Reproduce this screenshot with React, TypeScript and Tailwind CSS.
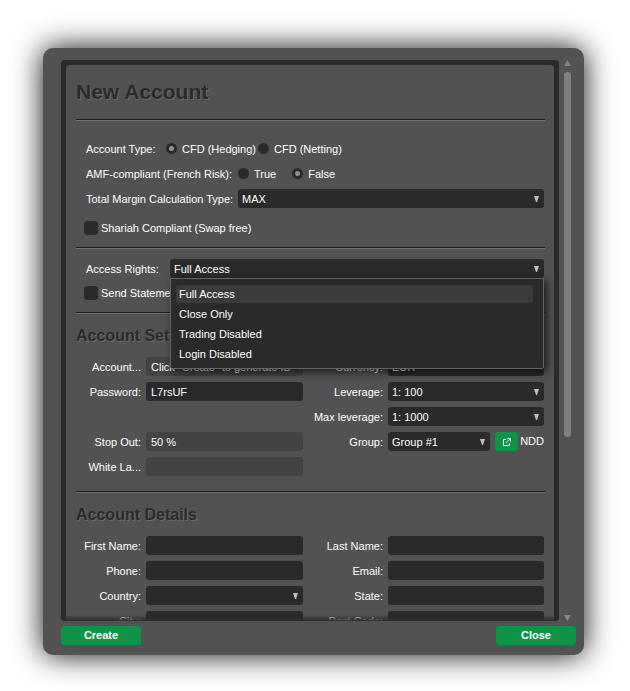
import { useState } from "react";
import type { ReactNode } from "react";

const accessOptions = ["Full Access", "Close Only", "Trading Disabled", "Login Disabled"];

const field = "h-[19px] w-full min-w-0 rounded-[3px] bg-[#2a2a2a] px-[5px] pt-px text-white outline-none";
const lockedField = "h-[19px] w-full min-w-0 rounded-[3px] bg-[#434343] px-[5px] pt-px text-white outline-none";

function Rule() {
  return <hr className="-mr-px h-[2px] border-0 border-t border-t-[#1c1c1c] bg-[#707070]" />;
}

function Heading({ children }: { children: ReactNode }) {
  return (
    <h2 className="mt-[10px] mb-[9px] text-[16px] leading-6 font-bold text-[#2a2a2a] [text-shadow:1px_1px_0_#6a6a6a]">
      {children}
    </h2>
  );
}

type SelectProps = {
  id: string;
  options: string[];
  value?: string;
  onChange?: (value: string) => void;
  arrow?: boolean;
};

function Select({ id, options, value, onChange, arrow = true }: SelectProps) {
  return (
    <div className="relative min-w-0 flex-1">
      <select
        id={id}
        value={value}
        onChange={onChange ? (e) => onChange(e.target.value) : undefined}
        className="block h-[19px] w-full appearance-none rounded-[3px] bg-[#2a2a2a] pt-[2px] pr-5 pl-1 leading-[17px] text-white outline-none"
      >
        {options.map((o) => (
          <option key={o}>{o}</option>
        ))}
      </select>
      {arrow && (
        <svg className="pointer-events-none absolute top-[7px] right-[5px]" width="5" height="6" viewBox="0 0 5 6">
          <path d="M0 0h5L3 6H2z" fill="#c0c0c0" />
        </svg>
      )}
    </div>
  );
}

function Radio({ id, name, label, checked }: { id: string; name: string; label: string; checked?: boolean }) {
  return (
    <span className="flex items-center gap-[5px]">
      <input
        id={id}
        type="radio"
        name={name}
        defaultChecked={checked}
        className="size-[11px] appearance-none rounded-full border-[3px] border-[#2a2a2a] bg-[#2a2a2a] checked:bg-[#929292]"
      />
      <label htmlFor={id} className="pt-[2px]">
        {label}
      </label>
    </span>
  );
}

function Check({ id, label }: { id: string; label: string }) {
  return (
    <div className="ml-2 flex h-[18px] items-center gap-[3px]">
      <input
        id={id}
        type="checkbox"
        className="size-[14px] appearance-none rounded-[3px] bg-[#2a2a2a] checked:bg-[#929292]"
      />
      <label htmlFor={id}>{label}</label>
    </div>
  );
}

function Left({ id, label, children }: { id: string; label: string; children: ReactNode }) {
  return (
    <div className="flex min-w-0 items-center gap-[5px]">
      <label htmlFor={id} className="w-[65px] shrink-0 pt-[2px] text-right whitespace-nowrap">
        {label}
      </label>
      {children}
    </div>
  );
}

function Right({ id, label, children }: { id: string; label: string; children: ReactNode }) {
  return (
    <div className="flex min-w-0 items-center gap-[5px]">
      <label htmlFor={id} className="w-20 shrink-0 pt-[2px] text-right">
        {label}
      </label>
      {children}
    </div>
  );
}

export default function App() {
  const [access, setAccess] = useState("Full Access");

  return (
    <div className="flex h-screen bg-white pt-12 pr-[46px] pb-9 pl-[43px] font-['Liberation_Sans',Arial,sans-serif] text-[11px] leading-[17px] text-white">
      <div
        role="dialog"
        aria-labelledby="dialog-title"
        className="flex min-h-0 min-w-0 flex-1 flex-col rounded-[10px] bg-[#525252] pt-3 pr-2 pb-[10px] pl-[18px] shadow-[0_0_30px_rgba(0,0,0,0.95)]"
      >
        <div className="flex min-h-0 flex-1">
          <div className="relative min-w-0 flex-1 overflow-hidden rounded-[4px] bg-[#2a2a2a] px-[5px] pt-[5px]">
            <form className="h-full overflow-hidden rounded-t-[4px] bg-[#525252] px-[10px] pt-3">
              <h1
                id="dialog-title"
                className="mb-3 text-[21px] leading-[30px] font-bold text-[#2a2a2a] [text-shadow:1px_1px_0_#6a6a6a]"
              >
                New Account
              </h1>
              <Rule />

              <div className="mt-[18px] mb-[11px] flex flex-col gap-[6px]">
                <div role="radiogroup" aria-label="Account Type" className="ml-[10px] flex h-[19px] items-center">
                  <span className="w-20 pt-[2px]">Account Type:</span>
                  <div className="flex gap-[2px]">
                    <Radio id="hedging" name="type" label="CFD (Hedging)" checked />
                    <Radio id="netting" name="type" label="CFD (Netting)" />
                  </div>
                </div>
                <div role="radiogroup" aria-label="AMF-compliant" className="ml-[10px] flex h-[19px] items-center">
                  <span className="w-[152px] pt-[2px]">AMF-compliant (French Risk):</span>
                  <div className="flex gap-4">
                    <Radio id="amf-true" name="amf" label="True" />
                    <Radio id="amf-false" name="amf" label="False" checked />
                  </div>
                </div>
                <div className="ml-[10px] flex items-center">
                  <label htmlFor="margin" className="w-[152px] pt-[2px]">
                    Total Margin Calculation Type:
                  </label>
                  <Select id="margin" options={["MAX", "SUM"]} />
                </div>
              </div>
              <Check id="shariah" label="Shariah Compliant (Swap free)" />
              <div className="h-[10px]" />
              <Rule />

              <div className="relative mt-[10px] mb-[6px] ml-[10px] flex items-center">
                <label htmlFor="access" className="w-[84px] pt-[2px]">
                  Access Rights:
                </label>
                <Select id="access" options={accessOptions} value={access} onChange={setAccess} />
                <ul
                  role="listbox"
                  aria-label="Access Rights"
                  className="absolute top-full right-0 left-[84px] z-10 rounded-b-[2px] border border-[#646464] bg-[#2a2a2a] pt-[6px] pr-[10px] pb-[3px] pl-[5px] shadow-[3px_3px_8px_rgba(0,0,0,0.7)]"
                >
                  {accessOptions.map((o) => (
                    <li
                      key={o}
                      role="option"
                      aria-selected={o === access}
                      onClick={() => setAccess(o)}
                      className="mb-[2px] h-[18px] rounded-[2px] px-[3px] leading-[19px] aria-selected:bg-[#3b3b3b]"
                    >
                      {o}
                    </li>
                  ))}
                </ul>
              </div>
              <Check id="statements" label="Send Statements" />
              <div className="h-[10px]" />
              <Rule />

              <Heading>Account Settings</Heading>
              <div className="mb-[15px] grid grid-cols-[227fr_241fr] gap-y-[6px]">
                <Left id="account-id" label="Account...">
                  <input id="account-id" readOnly defaultValue={'Click "Create" to generate ID'} className={lockedField} />
                </Left>
                <Right id="currency" label="Currency:">
                  <Select id="currency" options={["EUR", "USD"]} arrow={false} />
                </Right>
                <Left id="password" label="Password:">
                  <input id="password" defaultValue="L7rsUF" className={field} />
                </Left>
                <Right id="leverage" label="Leverage:">
                  <Select id="leverage" options={["1: 100", "1: 200"]} />
                </Right>
                <div />
                <Right id="max-leverage" label="Max leverage:">
                  <Select id="max-leverage" options={["1: 1000", "1: 500"]} />
                </Right>
                <Left id="stop-out" label="Stop Out:">
                  <input id="stop-out" readOnly defaultValue="50 %" className={lockedField} />
                </Left>
                <Right id="group" label="Group:">
                  <Select id="group" options={["Group #1", "Group #2"]} />
                  <div className="flex shrink-0 items-center gap-[2px]">
                    <button
                      type="button"
                      aria-label="Open group"
                      className="flex h-[19px] w-[23px] items-center justify-center rounded-[3px] bg-[#0f9347]"
                    >
                      <svg width="8" height="8" viewBox="0 0 8 8" fill="none" stroke="#fff">
                        <path d="M3 1.5H.5v6h6V5M4.5.5h3v3M7.5.5L3 5" />
                      </svg>
                    </button>
                    <span>NDD</span>
                  </div>
                </Right>
                <Left id="white-label" label="White La...">
                  <input id="white-label" readOnly className={lockedField} />
                </Left>
              </div>
              <Rule />

              <Heading>Account Details</Heading>
              <div className="grid grid-cols-[227fr_241fr] gap-y-[6px]">
                <Left id="first-name" label="First Name:">
                  <input id="first-name" className={field} />
                </Left>
                <Right id="last-name" label="Last Name:">
                  <input id="last-name" className={field} />
                </Right>
                <Left id="phone" label="Phone:">
                  <input id="phone" className={field} />
                </Left>
                <Right id="email" label="Email:">
                  <input id="email" className={field} />
                </Right>
                <Left id="country" label="Country:">
                  <Select id="country" options={[""]} />
                </Left>
                <Right id="state" label="State:">
                  <input id="state" className={field} />
                </Right>
                <Left id="city" label="City:">
                  <input id="city" className={field} />
                </Left>
                <Right id="post-code" label="Post Code:">
                  <input id="post-code" className={field} />
                </Right>
              </div>
            </form>
            <div className="pointer-events-none absolute inset-x-0 bottom-0 h-[6px] bg-linear-to-b from-transparent to-[#2a2a2a]" />
          </div>

          <div className="mr-[5px] ml-[5px] flex w-[7px] shrink-0 flex-col gap-[6px]">
            <svg width="7" height="6" viewBox="0 0 7 6" className="shrink-0">
              <path d="M3.5 0L7 6H0z" fill="#868686" />
            </svg>
            <div className="min-h-0 flex-1">
              <div className="h-[68%] rounded-full bg-[#808080]" />
            </div>
            <svg width="7" height="6" viewBox="0 0 7 6" className="shrink-0">
              <path d="M3.5 6L0 0h7z" fill="#868686" />
            </svg>
          </div>
        </div>

        <div className="mt-[5px] flex justify-between">
          <button type="button" className="h-[19px] w-20 rounded-[3px] bg-[#0f9347] font-bold">
            Create
          </button>
          <button type="button" className="h-[19px] w-20 rounded-[3px] bg-[#0f9347] font-bold">
            Close
          </button>
        </div>
      </div>
    </div>
  );
}
